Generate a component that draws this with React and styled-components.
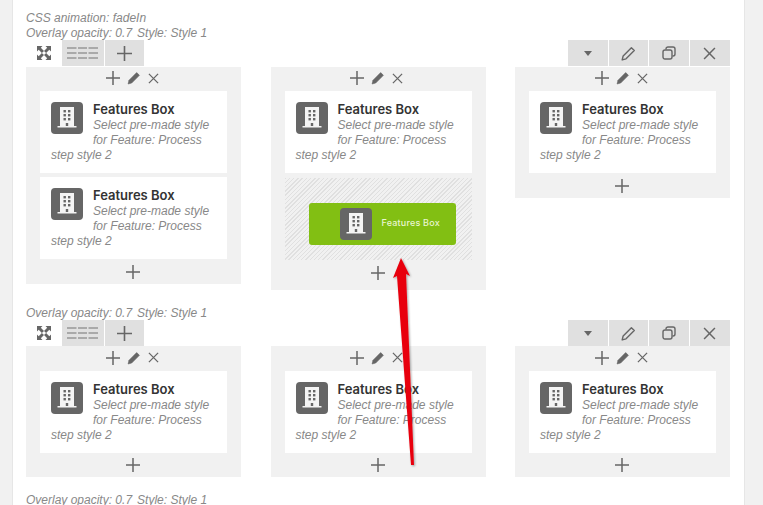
import React from 'react';
import styled, { createGlobalStyle } from 'styled-components';

const GlobalStyle = createGlobalStyle`
  html, body {
    margin: 0;
    padding: 0;
    height: 505px;
    overflow: hidden;
    background: #f1f1f1;
  }
`;

const Page = styled.div`
  position: relative;
  width: 763px;
  height: 505px;
  overflow: hidden;
  font-family: "Liberation Sans", Arial, sans-serif;
`;

const Panel = styled.div`
  width: 733px;
  height: 505px;
  margin-left: 12px;
  padding: 10px 14px 0 13px;
  box-sizing: border-box;
  background: #fff;
  border-left: 1px solid #e6e6e6;
  border-right: 1px solid #e6e6e6;
  overflow: hidden;
`;

const Section = styled.section`
  margin-bottom: 15px;
`;

const Meta = styled.div`
  height: 15px;
  font-size: 12px;
  line-height: 17px;
  font-style: italic;
  color: #888;
  white-space: nowrap;

  span + span {
    margin-left: 5px;
  }
`;

const Toolbars = styled.div`
  display: flex;
  justify-content: space-between;
  height: ${(p) => (p.$compact ? 26 : 27)}px;
  padding-bottom: ${(p) => (p.$compact ? 0 : 1)}px;
  box-sizing: border-box;
`;

const ToolGroup = styled.div`
  display: flex;
  gap: 1px;
`;

const ToolButton = styled.div`
  display: flex;
  align-items: center;
  justify-content: center;
  width: ${(p) => p.$w || 40}px;
  padding-right: ${(p) => (p.$plain ? 0 : 1)}px;
  box-sizing: border-box;
  background: ${(p) => (p.$plain ? 'transparent' : '#e0e0e0')};
  color: #666;
`;

const Columns = styled.div`
  display: grid;
  grid-template-columns: repeat(3, 215px);
  justify-content: space-between;
  align-items: start;
`;

const Column = styled.div`
  background: #f1f1f1;
  padding: 0 14px;
  ${(p) => p.$tall && 'padding-bottom: 5px;'}
`;

const ColumnHead = styled.div`
  display: flex;
  align-items: center;
  justify-content: center;
  gap: 7px;
  height: ${(p) => (p.$roomy ? 25 : 24)}px;
  padding: 0 3px 2px 0;
  box-sizing: border-box;
  color: #666;
`;

const ColumnFoot = styled.div`
  display: flex;
  align-items: center;
  justify-content: center;
  height: ${(p) => (p.$short ? 24 : 25)}px;
  padding-right: 1px;
  box-sizing: border-box;
  color: #666;
`;

const Card = styled.div`
  background: #fff;
  height: 82px;
  padding: 11px 2px 0 11px;
  box-sizing: border-box;
  font-size: 12px;
  line-height: 15px;
  font-style: italic;
  color: #888;

  & + & {
    margin-top: 4px;
  }
`;

const BoxIcon = styled.div`
  float: left;
  display: flex;
  align-items: center;
  justify-content: center;
  width: 32px;
  height: 32px;
  margin: 0 10px 0 0;
  border-radius: 4px;
  background: #666;
`;

const CardTitle = styled.div`
  font-family: Inter, "Liberation Sans", sans-serif;
  font-size: 13px;
  line-height: 15px;
  margin-bottom: 1px;
  font-style: normal;
  font-weight: 600;
  color: #333;
`;

const DropZone = styled.div`
  display: flex;
  align-items: flex-start;
  height: 82px;
  margin-top: 5px;
  padding: 25px 0 0 24px;
  box-sizing: border-box;
  background: repeating-linear-gradient(135deg, #e0e0e0 0 1px, #f1f1f1 1px 3px);
`;

const DragCard = styled.div`
  display: flex;
  align-items: center;
  width: 147px;
  height: 42px;
  padding-left: 31px;
  box-sizing: border-box;
  border-radius: 3px;
  background: #82bf13;
  color: #e9f6cf;
  font-family: Inter, "Liberation Sans", sans-serif;
  font-size: 9px;
  font-weight: 500;
  letter-spacing: 0.2px;
`;

const DragLabel = styled.span`
  margin-bottom: 4px;
`;

const ArrowOverlay = styled.svg`
  position: absolute;
  left: 0;
  top: 0;
  pointer-events: none;
`;

const Plus = ({ size = 14 }) => (
  <svg width={size} height={size} viewBox="0 0 14 14" fill="none" stroke="currentColor" strokeWidth="1.5">
    <path d="M7 0v14M0 7h14" />
  </svg>
);

const Cross = ({ size = 11 }) => (
  <svg width={size} height={size} viewBox="0 0 12 12" fill="none" stroke="currentColor" strokeWidth="1.4">
    <path d="M1 1l10 10M11 1L1 11" />
  </svg>
);

const Pencil = ({ size = 14, outline }) => (
  <svg width={size} height={size} viewBox="0 0 14 14" fill={outline ? 'none' : 'currentColor'} stroke="currentColor" strokeWidth={outline ? 1.3 : 0.6} strokeLinejoin="round">
    <path d="M9.7 1.6l2.7 2.7-7.7 7.7-3.6 1 .9-3.7z" />
  </svg>
);

const Expand = () => (
  <svg width="14" height="14" viewBox="0 0 14 14" fill="#666">
    <path d="M0 0h5.5L3.8 1.7 7 4.9 4.9 7 1.7 3.8 0 5.5zM14 0v5.5l-1.7-1.7L9.1 7 7 4.9l3.2-3.2L8.5 0zM14 14H8.5l1.7-1.7L7 9.1 9.1 7l3.2 3.2L14 8.5zM0 14V8.5l1.7 1.7L4.9 7 7 9.1l-3.2 3.2L5.5 14z" />
  </svg>
);

const Rows = () => (
  <svg width="31" height="12" viewBox="0 0 31 12" fill="none" stroke="#979797" strokeWidth="1.5">
    <path d="M0 1h9.5M11 1h9M21.5 1h9.5M0 6h9.5M11 6h9M21.5 6h9.5M0 11h9.5M11 11h9M21.5 11h9.5" />
  </svg>
);

const Caret = () => (
  <svg width="8" height="5" viewBox="0 0 8 5" fill="#666">
    <path d="M0 0h8L4 5z" />
  </svg>
);

const Copy = () => (
  <svg width="14" height="14" viewBox="0 0 14 14" fill="none" stroke="#666" strokeWidth="1.4">
    <rect x="1" y="4" width="9" height="9" rx="2" />
    <path d="M4 3.5V3a2 2 0 0 1 2-2h5a2 2 0 0 1 2 2v5a2 2 0 0 1-2 2h-.5" />
  </svg>
);

const Building = () => (
  <svg width="32" height="32" viewBox="0 0 32 32">
    <path fill="#f4f4f4" d="M9 5h14v19H9zM6.5 24h19v1.6h-19z" />
    <g fill="#666">
      <rect x="12.5" y="8" width="2.4" height="2.4" />
      <rect x="17" y="8" width="2.4" height="2.4" />
      <rect x="12.5" y="12" width="2.4" height="2.4" />
      <rect x="17" y="12" width="2.4" height="2.4" />
      <rect x="12.5" y="16" width="2.4" height="2.4" />
      <rect x="17" y="16" width="2.4" height="2.4" />
      <rect x="14.8" y="21" width="2.4" height="3" />
    </g>
  </svg>
);

const FeatureCard = () => (
  <Card>
    <BoxIcon><Building /></BoxIcon>
    <CardTitle>Features Box</CardTitle>
    Select pre-made style for Feature: Process step style 2
  </Card>
);

const Head = ({ roomy }) => (
  <ColumnHead $roomy={roomy}>
    <Plus />
    <Pencil />
    <Cross />
  </ColumnHead>
);

const Foot = ({ short }) => (
  <ColumnFoot $short={short}>
    <Plus />
  </ColumnFoot>
);

const Controls = ({ compact }) => (
  <Toolbars $compact={compact}>
    <ToolGroup>
      <ToolButton $plain $w={35}><Expand /></ToolButton>
      <ToolButton $w={42}><Rows /></ToolButton>
      <ToolButton $w={39}><Plus size={15} /></ToolButton>
    </ToolGroup>
    <ToolGroup>
      <ToolButton><Caret /></ToolButton>
      <ToolButton $w={39}><Pencil size={15} outline /></ToolButton>
      <ToolButton $w={40}><Copy /></ToolButton>
      <ToolButton><Cross size={13} /></ToolButton>
    </ToolGroup>
  </Toolbars>
);

const OverlayMeta = () => (
  <Meta>
    <span>Overlay opacity: 0.7</span>
    <span>Style: Style 1</span>
  </Meta>
);

const SingleColumn = () => (
  <Column>
    <Head roomy />
    <FeatureCard />
    <Foot short />
  </Column>
);

export default function App() {
  return (
    <Page>
      <GlobalStyle />
      <Panel>
        <Section>
          <Meta>CSS animation: fadeIn</Meta>
          <OverlayMeta />
          <Controls />
          <Columns>
            <Column>
              <Head />
              <FeatureCard />
              <FeatureCard />
              <Foot />
            </Column>
            <Column $tall>
              <Head />
              <FeatureCard />
              <DropZone>
                <DragCard>
                  <BoxIcon><Building /></BoxIcon>
                  <DragLabel>Features Box</DragLabel>
                </DragCard>
              </DropZone>
              <Foot />
            </Column>
            <Column>
              <Head />
              <FeatureCard />
              <Foot />
            </Column>
          </Columns>
        </Section>
        <Section>
          <OverlayMeta />
          <Controls compact />
          <Columns>
            <SingleColumn />
            <SingleColumn />
            <SingleColumn />
          </Columns>
        </Section>
        <OverlayMeta />
      </Panel>
      <ArrowOverlay width="763" height="505" viewBox="0 0 763 505">
        <defs>
          <filter id="arrowShadow" x="-50%" y="-10%" width="200%" height="120%">
            <feDropShadow dx="1" dy="1" stdDeviation="1" floodColor="#000" floodOpacity="0.35" />
          </filter>
        </defs>
        <polygon
          points="401,258 410,276 406,274 414,465 411,465 397,276 393,278"
          fill="#e8000f"
          filter="url(#arrowShadow)"
        />
      </ArrowOverlay>
    </Page>
  );
}
